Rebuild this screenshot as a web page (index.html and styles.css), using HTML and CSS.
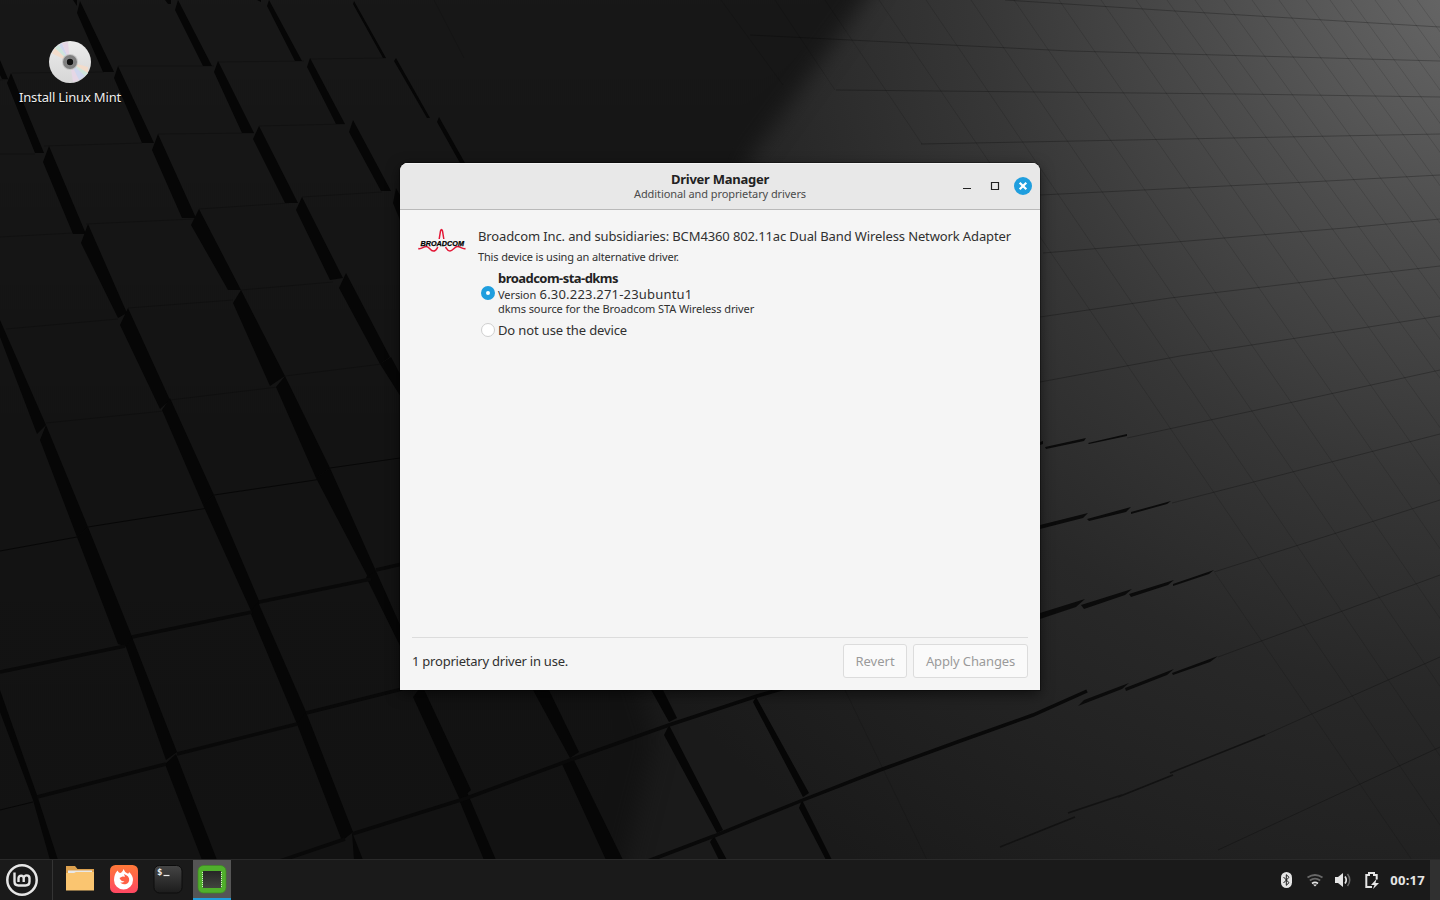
FILE: index.html
```html
<!DOCTYPE html>
<html lang="en">
<head>
<meta charset="utf-8">
<title>Driver Manager</title>
<link rel="stylesheet" href="styles.css">
</head>
<body>
<main class="desktop">
  <svg class="wallpaper" viewBox="0 0 1440 900" aria-hidden="true">
    <defs>
      <radialGradient id="light" gradientUnits="userSpaceOnUse" cx="1480" cy="-20" r="1080">
        <stop offset="0" stop-color="#696969"/><stop offset=".25" stop-color="#4c4c4c"/><stop offset=".46" stop-color="#373737"/><stop offset=".66" stop-color="#282828"/><stop offset="1" stop-color="#1a1a1a"/>
      </radialGradient>
      <linearGradient id="shade" x1="0" y1="0" x2="0" y2="1"><stop offset="0" stop-color="#181818"/><stop offset=".5" stop-color="#131313"/><stop offset="1" stop-color="#121212"/></linearGradient>
      <filter id="soft" x="-10%" y="-10%" width="120%" height="120%" color-interpolation-filters="sRGB"><feGaussianBlur stdDeviation="11"/></filter>
      <filter id="edge" color-interpolation-filters="sRGB"><feGaussianBlur stdDeviation=".6"/></filter>
    </defs>
    <rect width="1440" height="900" fill="url(#light)"/>
    <path d="M-60-60H900L864 0 752 155 600 560 655 740 600 960H-60Z" fill="url(#shade)" filter="url(#soft)"/>
    <g fill="none" stroke="#000" stroke-opacity=".13">
      <path d="M721 0l62 85M775 0l60 90M825 0l97 144M879 0l612 900M926 0l612 900M971 0l615 900M1014 0l620 900M1059 0l625 900M1101 0l630 900M1136 0l640 900M1167 0l650 900M1195 0l650 900M1224 0l650 900M1252 0l650 900M1279 0l650 900M1306 0l650 900M1330 0l650 900M1351 0l650 900M1375 0l650 900M1398 0l650 900M1417 0l650 900M1215 573l197 287M845 690l82 170M434 0l30 58"/>
    </g>
    <g fill="none" stroke="#000" stroke-opacity=".25">
      <path d="M1005 0l170 11 265 16M750 35l320 16 370 10M836 90l404 4 200 3M921 144l519-10M1040 195l268-13 132-7M1043 253l302-25 95-9M1040 317l130-19 210-25 60-7M1040 382l140-26 260-40M1127 438l125-27 188-41M1172 503l268-69M1214 572l226-72M1218 657l222-82M1265 735l78-35 97-43M1218 850l222-103"/>
    </g>
    <g fill="none" stroke="#000" stroke-opacity=".22">
      <path d="M0 80l11-1M12 73l92-1M118 66h96M218 62l86-1M310 59l76-1M44 146l98-3M158 134l96-1M259 126l86-2M0 154h35M86 224l108-5M199 209l90-6M302 197l80-5M0 237l73-4M128 308l105-8M241 290l92-8M6 329l112-10M170 400l108-13M46 423l118-12M285 376l97-12"/>
    </g>
    <path d="M0 551l77-14M88 527l120-19M214 495l108-16M330 468l70-10M0 810l33-8" fill="none" stroke="#070707"/>
    <g fill="#060606" filter="url(#edge)">
      <path d="M73 0h4v6zM165 0h6v4h-3zM257 0h4v2zM0 60l8 19H2L0 75z"/>
      <path d="M80 1l34 71h-11L77 13zM178 0l34 66h-9l-28-56zM269 0l33 61h-7L267 6zM354 1l32 57h-3L353 4z"/>
      <path d="M11 73l33 80h-9L7 83zM118 66l36 77h-12l-28-65zM218 61l36 72h-12l-28-61zM310 58l35 66h-9l-29-57zM396 58l34 60h-3l-33-57z"/>
      <path d="M49 146l37 88H73L43 162zM158 134l38 84h-14l-30-68zM259 126l39 77h-13l-32-64zM353 120l38 71h-10l-32-59zM439 117l26 46h-5l-23-41z"/>
      <path d="M88 224l39 89-9 5-37-75zM199 209l42 81h-13l-37-65zM302 197l41 81-13 2-34-70zM396 188l8 14v28l-11-27z"/>
      <path d="M128 308l42 92-10 9-40-84zM241 290l44 86-15 10-37-83zM346 273l44 84-10 7-41-76zM0 320l46 105-9 9L0 337z"/>
      <path d="M46 425l42 102-11 10-37-97zM170 398l44 97-11 10-41-95zM285 376l45 92-14 10-40-91zM391 357l15 28v20l-26-41z"/>
      <path d="M88 527l45 112-6 8-9-3-41-107zM214 495l46 108-8 10-49-108zM330 468l46 103-7 8-53-101z"/>
      <path d="M132 637l45 115-11 8-40-113zM258 602l49 112-10 10-47-112zM376 571l29 65v20l-39-79z"/>
      <path d="M0 690l37 105 21 65h-8L33 800 0 712zM176 754l41 106h-15l-37-96zM306 712l47 120-11 9-45-117zM352 832l11 28h-9zM422 685l49 105-11 10-47-103zM467 792l29 68h-12l-24-58z"/>
      <path d="M548 688l31 64-9 6-37-68zM573 758l50 102h-17l-44-96zM662 688l15 30-8 4-19-34zM669 725l54 105-6 3-53-98zM756 697l53 96-6 4-50-95zM714 836l13 24h-8l-9-18zM802 800l30 60h-6l-27-52z"/>
    </g>
    <g fill="none" stroke="#090909" stroke-width="3.5" filter="url(#edge)">
      <path d="M376 570l26-6M259 602l112-23M132 637l120-25M0 672l125-26M306 713l96-24M177 754l120-30M37 797l129-33M352 834l115-36 106-39 96-34 88-29 35-10M280 861l65-22M648 861l66-25 89-36 77-30 80-29 73-26 54-24"/>
    </g>
    <g fill="#0b0b0b" filter="url(#edge)">
      <path d="M1040 442l3-1v3l-3 1zM1045 447l41-9-2 3-38 8zM1088 443l39-9v2l-38 8zM1040 525l48-12-5 5-43 11zM1087 519l44-12-5 5-37 9zM1131 512l40-11-4 3-36 10zM1040 613l45-14-9 8-36 12zM1081 605l51-16-7 6-41 14zM1129 594l45-14-6 5-37 12zM1173 584l41-14-5 4-36 12zM1084 700l45-17-7 6-44 17zM1125 688l49-19-7 6-41 16zM1172 673l46-17-8 6-37 13z"/>
    </g>
    <path d="M1000 847l75-30M1068 813l54-18M1118 797l55-22M1170 773l95-38" fill="none" stroke="#121212" stroke-width="1.500"/>
  </svg>

  <a class="launcher">
    <svg class="disc" viewBox="0 0 44 44">
      <defs><linearGradient id="silver" x1="0" y1="0" x2="0" y2="1"><stop stop-color="#ececec"/><stop offset="1" stop-color="#d6d6d6"/></linearGradient><filter id="sheen" color-interpolation-filters="sRGB"><feGaussianBlur stdDeviation=".7"/></filter></defs>
      <circle cx="22" cy="22" r="21" fill="url(#silver)"/>
      <g filter="url(#sheen)"><path d="M22 22 4 13.500 7 8z" fill="#f3dccb"/><path d="M22 22 7 8l4-3z" fill="#cfe6dc"/><path d="M22 22 11 5l3-2z" fill="#d0d7ee"/><path d="M22 22 14 3l6-1z" fill="#e6d7e6"/>
      <path d="M22 22l18 11a21 21 0 0 1-3 3z" fill="#cfe6dc"/><path d="M22 22l18 5v6z" fill="#f3dccb"/><path d="M22 22l15 14-6 4z" fill="#d0d7ee"/><path d="M22 22l9 18-6 2z" fill="#e6d7e6"/></g>
      <circle cx="22" cy="22" r="8" fill="#c5c5c5"/><circle cx="22" cy="22" r="5.500" fill="#8c8c8c" stroke="#808080" stroke-width="3"/><circle cx="22" cy="22" r="3.200" fill="#111"/>
    </svg>
    <span class="launcher-name">Install Linux Mint</span>
  </a>

  <section class="window">
    <header class="titlebar">
      <div class="titles"><h1 class="title">Driver Manager</h1><p class="subtitle">Additional and proprietary drivers</p></div>
      <svg class="controls" viewBox="0 0 72 24"><path d="M3 14.500h8" stroke="#222"/><path d="M31.500 8.500h7v7h-7z" fill="none" stroke="#222" stroke-width="1.200"/><circle cx="63" cy="12" r="9" fill="#1f9ede"/><path d="M59.700 8.700l6.600 6.600m0-6.600l-6.600 6.600" stroke="#fff" stroke-width="2.200"/></svg>
    </header>
    <div class="content">
      <div class="device">
        <svg class="brand" viewBox="0 0 48 26">
          <path d="M21.200 11 22.500 3q1-3.200 2 0l1.300 8M.3 20.500c3 1 5-2 8-2s4 4.500 7 4.500 3.500-2.500 4.500-4M27.500 19c1 1.500 2 4 4.500 4 3 0 4.500-4.500 7.500-4.500s5 3 8 2" fill="none" stroke="#e31837" stroke-width="1.500"/>
          <text class="brand-word" x="2.500" y="17.500" textLength="43.500" lengthAdjust="spacingAndGlyphs">BROADCOM</text>
        </svg>
        <div class="details">
          <p class="device-name">Broadcom Inc. and subsidiaries: BCM4360 802.11ac Dual Band Wireless Network Adapter</p>
          <p class="device-state">This device is using an alternative driver.</p>
          <div class="option"><span class="radio on"></span><div class="option-text"><strong class="driver">broadcom-sta-dkms</strong><span class="version"><span class="small">Version</span> <span class="number">6.30.223.271-23ubuntu1</span></span><span class="small note">dkms source for the Broadcom STA Wireless driver</span></div></div>
          <div class="option second"><span class="radio"></span><span class="none">Do not use the device</span></div>
        </div>
      </div>
      <footer class="actions"><span class="status">1 proprietary driver in use.</span><button class="button" disabled>Revert</button><button class="button apply" disabled>Apply Changes</button></footer>
    </div>
  </section>

  <nav class="panel">
    <div class="menu"><svg viewBox="0 0 34 34"><circle cx="17" cy="17" r="14.700" fill="none" stroke="#e6e6e6" stroke-width="2.500"/><path d="M9.500 9.500v9q0 4 4 4h7q4 0 4-4v-3.200a2.900 2.900 0 0 0-5.800 0v3.700m0-3.700a2.600 2.600 0 0 0-5.200 0v3.700" fill="none" stroke="#e6e6e6" stroke-width="2.400"/></svg></div>
    <div class="apps">
      <div class="app"><svg viewBox="0 0 38 32"><path d="M5 3h9l2.500 3H33v10H5z" fill="#dca04e"/><path d="M7 7.500h24V14H7z" fill="#e8e8e8"/><path d="M5 10h8l2-1h18v18.500H5z" fill="#fac570"/></svg></div>
      <div class="app"><svg viewBox="0 0 38 32"><defs><linearGradient id="fox" x1="0" y1="0" x2="0" y2="1"><stop stop-color="#ff7938"/><stop offset="1" stop-color="#ff4762"/></linearGradient></defs><rect x="5" y="2" width="28" height="28" rx="5.500" fill="url(#fox)"/><path d="M12.500 7.500q1 2 2.500 2.500 2.300-.3 3.500-4 1 3 4 4.500 1.500.5 1.500-1.500 4 3.500 4 8a9.500 9.500 0 1 1-19 0q0-5.500 3.500-9.500z" fill="#fff"/><path d="M14.500 15l3-1.500 2.500.2-1-2.700q5.500 2 5.200 6.200a5 5 0 0 1-9 2q2.500 1 4.300-.6-3.500 0-5-3.600z" fill="#ff6046"/></svg></div>
      <div class="app"><svg viewBox="0 0 38 32"><defs><linearGradient id="term" x1="0" y1="0" x2="0" y2="1"><stop stop-color="#454545"/><stop offset="1" stop-color="#1c1c1c"/></linearGradient></defs><rect x="5" y="2.500" width="28" height="27.500" rx="5.500" fill="url(#term)" stroke="#0c0c0c"/><text class="prompt" x="8" y="11.500">$</text><path d="M14.500 12.500h6" stroke="#eee" stroke-width="1.200"/></svg></div>
      <div class="app active"><svg viewBox="0 0 38 32"><defs><linearGradient id="chip" x1="0" y1="0" x2="0" y2="1"><stop stop-color="#262626"/><stop offset="1" stop-color="#41443e"/></linearGradient></defs><rect x="5" y="2.500" width="28" height="27.500" rx="5.500" fill="#50b02c" stroke="#3d8b21" stroke-width=".7"/><rect x="10" y="8" width="18" height="17" fill="url(#chip)"/><path d="M9.500 9v16M28.500 9v16" stroke="#d2efc5" stroke-dasharray="1 1" stroke-width="1"/></svg></div>
    </div>
    <div class="tray">
      <svg class="tray-icons" viewBox="0 0 104 24">
        <rect x="3" y="4" width="11" height="16" rx="5.500" fill="#e5e5e5"/><path d="M5.500 9l5.500 5.700-2.700 2.600V6.700L11 9.300 5.500 15" fill="none" stroke="#1a1a1a"/>
        <g fill="none" stroke="#686868" stroke-width="1.800"><path d="M29.500 9.500q7.500-5 15 0M31.800 12.500q5.200-3.600 10.400 0"/></g><path d="M34 15.400q3-2 6 0" fill="none" stroke="#e5e5e5" stroke-width="1.800"/><path d="M35 16.500h4l-2 2z" fill="#e5e5e5"/>
        <path d="M57 9h3l5-4v14l-5-4h-3z" fill="#e5e5e5"/><path d="M67 8.500q2.500 3.500 0 7" stroke="#e5e5e5" stroke-width="1.700" fill="none"/><path d="M69.500 6q4.500 6 0 12" stroke="#686868" stroke-width="1.500" fill="none"/>
        <path d="M94 19h-5.700V7h2.700V5h5v2h2.700v4.500" fill="none" stroke="#e5e5e5" stroke-width="2"/><path d="M98.500 11l-5.500 6h3.500l-1.500 4 6-6h-3.500z" fill="#e5e5e5"/>
      </svg>
      <time class="clock">00:17</time><span class="show-desktop"></span>
    </div>
  </nav>
</main>
</body>
</html>
```
FILE: styles.css
```css
*{box-sizing:border-box}
body{margin:0;overflow:hidden;font-family:"Noto Sans",sans-serif;font-size:13px;color:#303030}
h1,p{margin:0}
.desktop{position:relative;display:flex;flex-direction:column;justify-content:space-between;width:1440px;height:900px;background:#171717}
.wallpaper{position:absolute;inset:0;width:1440px;height:900px}
.launcher{position:absolute;left:10px;top:40px;width:120px;display:flex;flex-direction:column;align-items:center;color:#eee}
.disc{width:44px;height:44px}
.launcher-name{margin-top:4px;line-height:18px;letter-spacing:-.17px;white-space:nowrap;text-shadow:0 1px 1px #000}
.window{position:absolute;left:400px;top:163px;width:640px;height:527px;display:flex;flex-direction:column;background:#f5f5f5;border-radius:8px 8px 0 0;box-shadow:0 0 0 1px rgba(0,0,0,.3),0 4px 14px rgba(0,0,0,.55);overflow:hidden}
.titlebar{height:47px;display:grid;grid-template-columns:72px 1fr 72px;padding:0 8px;align-items:center;background:#e8e8e8;border-bottom:1px solid #b9b9b9;box-shadow:inset 0 1px #f3f3f3}
.titles{grid-column:2;text-align:center;padding-bottom:2px}
.title{font-size:13px;line-height:16px;letter-spacing:-.27px;color:#222}
.subtitle{font-size:11px;line-height:13px;letter-spacing:-.09px;color:#4b4b4b}
.controls{width:72px;height:24px}
.content{flex:1;display:flex;flex-direction:column;justify-content:space-between;padding:17px 12px 12px}
.device{display:flex;padding-left:6px;gap:12px;white-space:nowrap}
.brand{width:48px;height:26px;flex:none;margin-top:1px}
.brand-word{font:italic 900 7px "Liberation Sans",sans-serif;fill:#000;stroke:#000;stroke-width:.25px}
.device-name{line-height:18px;letter-spacing:-.123px}
.device-state{font-size:11px;line-height:16px;margin-top:4px;letter-spacing:-.15px}
.option{display:flex;align-items:center;gap:3px;padding-left:3px;margin-top:5px}
.option-text{display:flex;flex-direction:column}
.driver{line-height:17px;letter-spacing:-.54px;color:#222}
.version{line-height:15px}
.small{font-size:11px;letter-spacing:-.08px}
.number{letter-spacing:.19px}
.note{line-height:14px}
.second{margin-top:4px;line-height:20px}
.none{letter-spacing:-.13px}
.radio{width:14px;height:14px;border-radius:50%;background:#fff;border:1px solid #cfcfcf}
.radio.on{border:5px solid #1f9ede}
.actions{display:flex;align-items:flex-start;gap:6px;border-top:1px solid #dcdcdc;padding-top:6px}
.status{flex:1;line-height:34px;letter-spacing:-.23px}
.button{width:64px;height:34px;padding:0;font:inherit;color:#9a9a9a;background:#fafafa;border:1px solid #dcdcdc;border-radius:3px;white-space:nowrap}
.apply{width:115px;letter-spacing:-.13px}
.panel{position:relative;margin-top:auto;height:41px;display:flex;background:#1a1a1a;border-top:1px solid #2a2a2a}
.menu{width:53px;border-right:1px solid #343434;padding:3px 5px}
.menu svg{width:34px;height:34px;display:block}
.apps{display:flex;gap:6px;padding-left:8px}
.app{width:38px;height:40px;padding-top:3px}
.app svg{width:38px;height:32px;display:block}
.active{background:#555;border-bottom:2px solid #1f9ede}
.prompt{font:bold 9px "DejaVu Sans Mono",monospace;fill:#eee}
.tray{margin-left:auto;display:flex;align-items:center}
.tray-icons{width:104px;height:24px}
.clock{margin-left:8px;margin-right:5px;color:#e5e5e5;font-weight:700;line-height:18px;letter-spacing:.25px}
.show-desktop{width:10px;height:40px;background:#303030}
```
